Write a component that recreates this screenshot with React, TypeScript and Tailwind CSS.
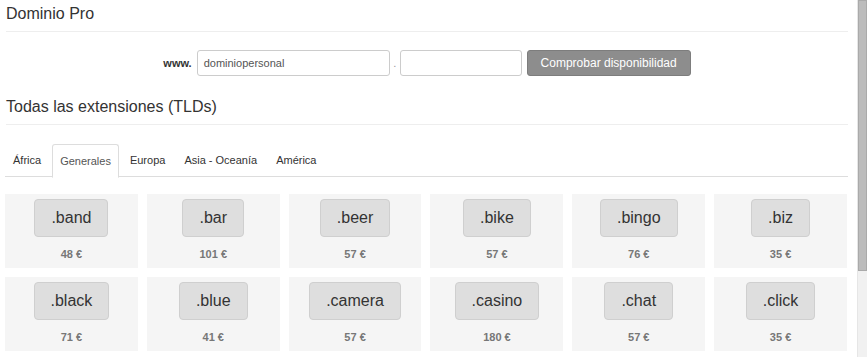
import React from "react";

const rows = [
  [
    [".band", "48 €"],
    [".bar", "101 €"],
    [".beer", "57 €"],
    [".bike", "57 €"],
    [".bingo", "76 €"],
    [".biz", "35 €"],
  ],
  [
    [".black", "71 €"],
    [".blue", "41 €"],
    [".camera", "57 €"],
    [".casino", "180 €"],
    [".chat", "57 €"],
    [".click", "35 €"],
  ],
];

const tabs = ["África", "Generales", "Europa", "Asia - Oceanía", "América"];

export default function App() {
  return (
    <div
      className="flex w-[867px] h-[357px] overflow-hidden bg-white text-[#333]"
      style={{ fontFamily: '"Liberation Sans", Arial, sans-serif' }}
    >
      <div className="w-[857px] pl-[6px] pr-[9px]">
        <h2 className="pt-[4px] pb-[7px] text-[16px] leading-[20px] font-normal text-[#333] border-b border-[#eee]">
          Dominio Pro
        </h2>

        <div className="mt-[18px] flex items-center justify-center h-[26px]">
          <span className="text-[11px] font-bold text-[#333] mr-[5px]">www.</span>
          <div className="w-[193px] h-[26px] border border-[#ccc] rounded-[3px] flex items-center pl-[6px] text-[11px] text-[#555]">
            dominiopersonal
          </div>
          <span className="w-[10px] text-center text-[11px] text-[#999]">.</span>
          <div className="w-[122px] h-[26px] border border-[#ccc] rounded-[3px]" />
          <div className="ml-[5px] w-[164px] h-[26px] bg-[#8d8d8d] border border-[#7d7d7d] rounded-[3px] flex items-center justify-center text-white text-[12px]">
            Comprobar disponibilidad
          </div>
        </div>

        <h2 className="mt-[21px] pb-[7px] text-[16px] leading-[20px] font-normal text-[#333] border-b border-[#eee]">
          Todas las extensiones (TLDs)
        </h2>

        <div className="mt-[19px] flex border-b border-[#ddd] h-[33px] -ml-px">
          {tabs.map((t, i) => (
            <div
              key={t}
              className={
                i === 1
                  ? "mr-[3px] px-[7px] h-[34px] flex items-center text-[11px] text-[#555] bg-white border border-[#ddd] border-b-white rounded-t-[3px]"
                  : "mr-[3px] px-[7px] h-[33px] flex items-center text-[11px] text-[#333] border border-transparent"
              }
            >
              {t}
            </div>
          ))}
        </div>

        <div className="mt-[17px] -ml-px w-[842px] flex flex-col gap-[9px]">
          {rows.map((r, ri) => (
            <div key={ri} className="grid grid-cols-6 gap-[9px]">
              {r.map(([name, price]) => (
                <div
                  key={name}
                  className="h-[74px] bg-[#f5f5f5] flex flex-col items-center pt-[5px]"
                >
                  <div className="h-[38px] px-[16px] flex items-center bg-[#dedede] border border-[#cfcfcf] rounded-[4px] text-[16px] text-[#333]">
                    {name}
                  </div>
                  <div className="mt-[10px] text-[11px] leading-[14px] font-bold text-[#777]">
                    {price}
                  </div>
                </div>
              ))}
            </div>
          ))}
        </div>
      </div>
      <div className="w-[10px] h-[357px] bg-[#f1f1f1] border-l border-[#e6e6e6]">
        <div className="h-[271px] bg-[#bcbcbc] border border-[#aaa]" />
      </div>
    </div>
  );
}
